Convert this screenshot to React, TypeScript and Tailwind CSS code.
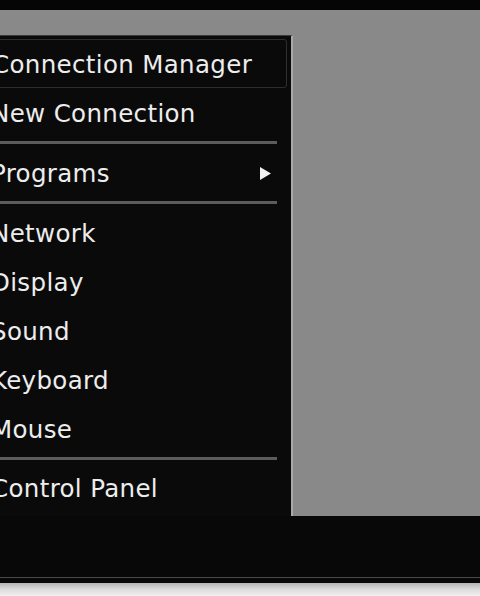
import React from "react";

const font = { fontFamily: '"DejaVu Sans", Verdana, sans-serif' };

function Item({ label, boxed, arrow }: { label: string; boxed?: boolean; arrow?: boolean }) {
  return (
    <div
      className={
        "h-[49px] flex items-center justify-between mr-[4px] pr-[16px] " +
        (boxed ? "border border-[#2e2e2e] rounded-[3px] -ml-[4px] pl-0" : "")
      }
    >
      <span
        className={
          "pt-[3px] text-[24.5px] leading-none tracking-[0.35px] text-[#ededed] whitespace-nowrap " +
          (boxed ? "-ml-[5px]" : "-ml-[9px]")
        }
      >
        {label}
      </span>
      {arrow && (
        <svg width="11" height="13" viewBox="0 0 11 13" className="mt-[1px]">
          <polygon points="0,0 11,6.5 0,13" fill="#f2f2f2" />
        </svg>
      )}
    </div>
  );
}

function Sep({ h }: { h: string }) {
  return (
    <div className={"flex items-center pr-[14px] " + h}>
      <div className="h-[3px] w-full bg-[#5c5c5c]" />
    </div>
  );
}

export default function App() {
  return (
    <div className="w-[480px] h-[596px] flex flex-col bg-[#080808] overflow-hidden" style={font}>
      <div className="h-[10px] bg-[#050505]" />
      <div className="h-[506px] bg-[#898989] flex flex-col">
        <div className="h-[25px]" />
        <div className="w-[293px] h-[481px] bg-[#0a0a0a] border-t border-t-[#3a3a3a] border-r-[2px] border-r-[#a9a9a9] pt-[3px] flex flex-col overflow-hidden">
          <Item label="Connection Manager" boxed />
          <Item label="New Connection" />
          <Sep h="h-[11px]" />
          <Item label="Programs" arrow />
          <Sep h="h-[11px]" />
          <Item label="Network" />
          <Item label="Display" />
          <Item label="Sound" />
          <Item label="Keyboard" />
          <Item label="Mouse" />
          <Sep h="h-[10px]" />
          <Item label="Control Panel" />
        </div>
      </div>
      <div className="h-[61px] bg-[#080808]" />
      <div className="h-[1px] bg-[#4a4a4a]" />
      <div className="h-[5px] bg-[#080808]" />
      <div className="flex-1 bg-gradient-to-b from-[#b5b5b5] via-[#dcdcdc] to-[#f0f0f0]" />
    </div>
  );
}
